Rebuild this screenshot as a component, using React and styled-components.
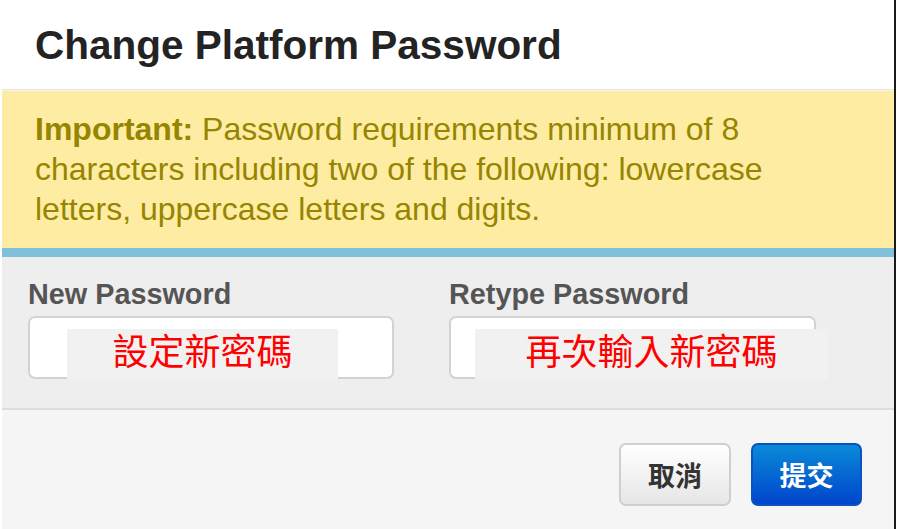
import React from 'react';
import styled, { createGlobalStyle } from 'styled-components';

const GlobalStyle = createGlobalStyle`
  html, body {
    margin: 0;
    padding: 0;
    background: #ffffff;
  }
  body {
    font-family: "Liberation Sans", Arial, "Noto Sans CJK TC", sans-serif;
  }
`;

const Modal = styled.div`
  margin-left: 2px;
  width: 892px;
  height: 529px;
  border-right: 2px solid #1a1a1a;
  display: flex;
  flex-direction: column;
  background: #f5f5f5;
  overflow: hidden;
`;

const Header = styled.div`
  height: 90px;
  box-sizing: border-box;
  padding-left: 33px;
  display: flex;
  align-items: center;
  background: #ffffff;
  border-bottom: 1px solid #e5e5e5;
`;

const Title = styled.h3`
  margin: 1px 0 0;
  font-size: 40.5px;
  font-weight: 700;
  color: #232323;
`;

const Alert = styled.div`
  margin-top: 1px;
  background: #feeca3;
  border-bottom: 9px solid #80c0d8;
  padding: 18px 69px 19px 33px;
  font-size: 32px;
  line-height: 40px;
  color: #968500;
`;

const Strong = styled.strong`
  font-weight: 700;
`;

const Body = styled.div`
  background: #eeeeee;
  padding: 22px 0 29px 26px;
  display: flex;
  gap: 55px;
  border-bottom: 2px solid #dddddd;
`;

const Field = styled.div`
  display: flex;
  flex-direction: column;
`;

const Label = styled.label`
  font-size: 28.8px;
  line-height: 30px;
  font-weight: 700;
  color: #555555;
  margin-bottom: 7px;
`;

const InputWrap = styled.div`
  position: relative;
  width: ${(p) => p.width}px;
  height: 63px;
  box-sizing: border-box;
  background: #ffffff;
  border: 2px solid #d2d2d2;
  border-radius: 7px;
`;

const Note = styled.div`
  position: absolute;
  top: 11px;
  left: ${(p) => p.left}px;
  width: ${(p) => p.width}px;
  height: 51px;
  background: #f1f1f1;
  color: #ff0000;
  font-family: "Noto Sans CJK TC", sans-serif;
  font-size: 36px;
  line-height: 1;
  display: flex;
  align-items: center;
  justify-content: center;
  padding-bottom: 12px;
  box-sizing: border-box;
`;

const Footer = styled.div`
  flex: 1;
  background: #f5f5f5;
  padding: 33px 32px 0 0;
  display: flex;
  justify-content: flex-end;
  align-items: flex-start;
  gap: 20px;
`;

const Button = styled.button`
  width: ${(p) => p.width}px;
  height: 63px;
  padding: 0;
  border-radius: 7px;
  font-family: "Noto Sans CJK TC", sans-serif;
  font-size: 27px;
  font-weight: 700;
  cursor: pointer;
  border: 2px solid ${(p) => (p.primary ? '#0a52c0' : '#cfcfcf')};
  color: ${(p) => (p.primary ? '#ffffff' : '#333333')};
  background: ${(p) =>
    p.primary
      ? 'linear-gradient(#0a8ad8, #0045cc)'
      : 'linear-gradient(#ffffff, #e6e6e6)'};
`;

const App = () => {
  return (
    <>
      <GlobalStyle />
      <Modal>
        <Header>
          <Title>Change Platform Password</Title>
        </Header>
        <Alert>
          <Strong>Important:</Strong> Password requirements minimum of 8
          characters including two of the following: lowercase letters,
          uppercase letters and digits.
        </Alert>
        <Body>
          <Field>
            <Label>New Password</Label>
            <InputWrap width={366}>
              <Note left={37} width={271}>設定新密碼</Note>
            </InputWrap>
          </Field>
          <Field>
            <Label>Retype Password</Label>
            <InputWrap width={367}>
              <Note left={24} width={353}>再次輸入新密碼</Note>
            </InputWrap>
          </Field>
        </Body>
        <Footer>
          <Button width={112}>取消</Button>
          <Button width={111} primary>提交</Button>
        </Footer>
      </Modal>
    </>
  );
};

export default App;
